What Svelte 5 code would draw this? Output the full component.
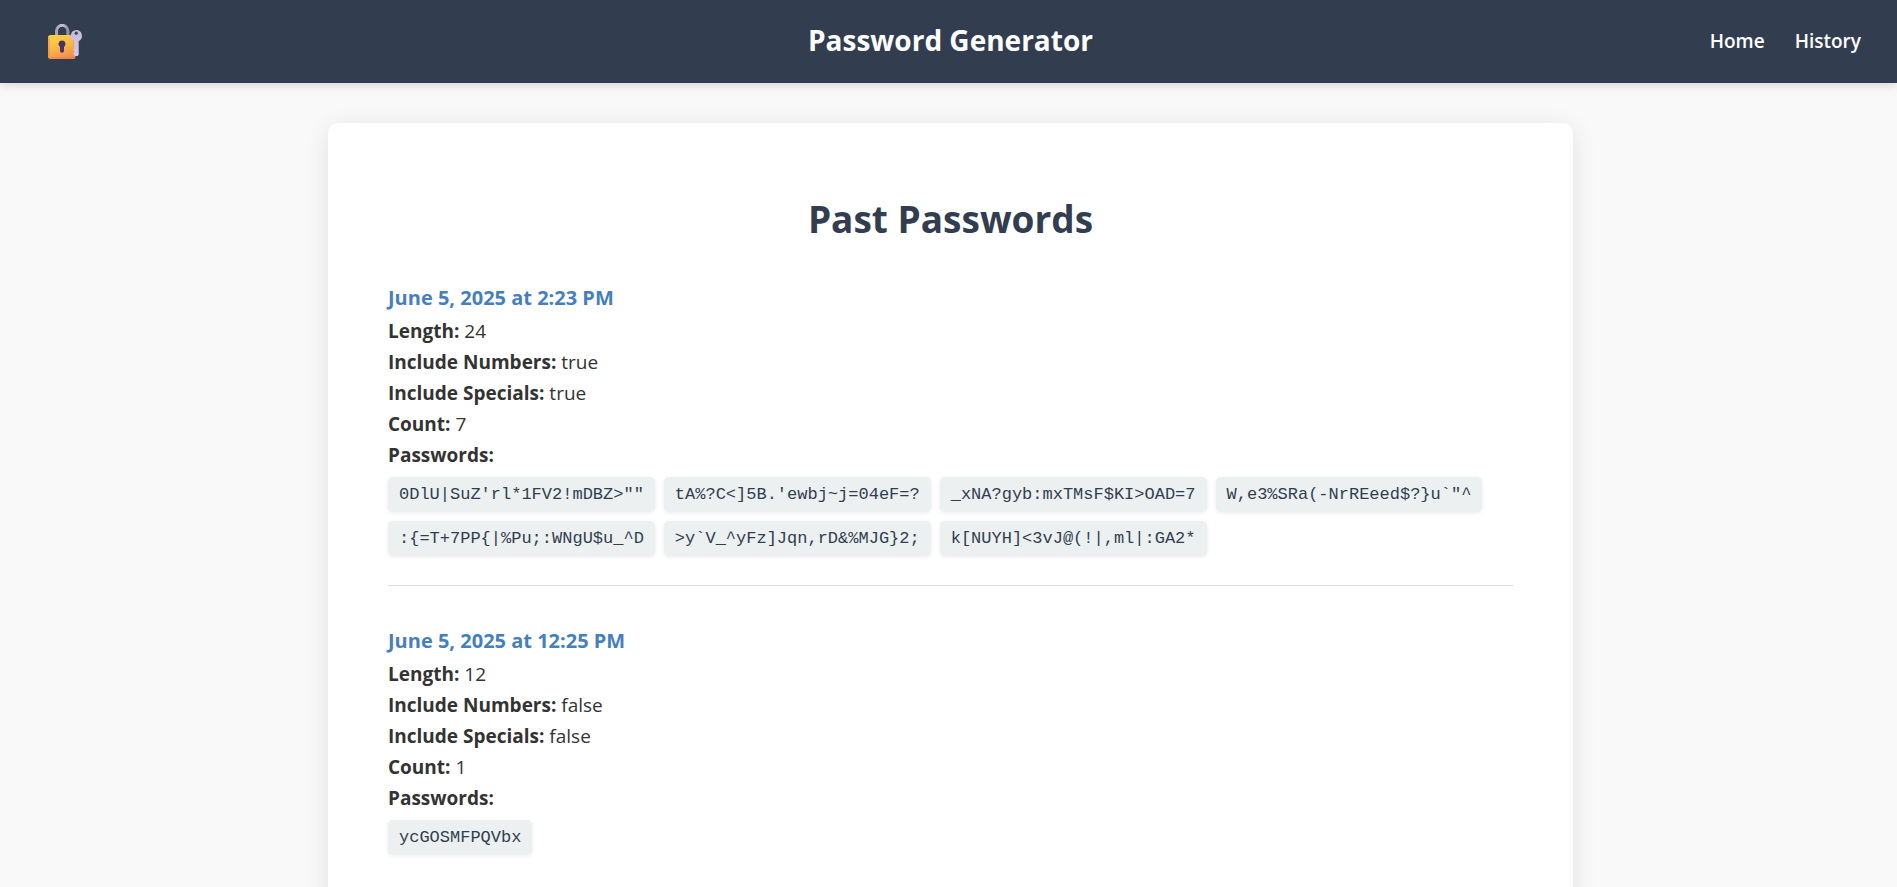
<script>
  const entries = [
    {
      date: 'June 5, 2025 at 2:23 PM',
      length: 24,
      numbers: true,
      specials: true,
      passwords: [
        `0DlU|SuZ'rl*1FV2!mDBZ>""`,
        `tA%?C<]5B.'ewbj~j=04eF=?`,
        `_xNA?gyb:mxTMsF$KI>OAD=7`,
        'W,e3%SRa(-NrREeed$?}u`"^',
        ':{=T+7PP{|%Pu;:WNgU$u_^D',
        '>y`V_^yFz]Jqn,rD&%MJG}2;',
        'k[NUYH]<3vJ@(!|,ml|:GA2*'
      ]
    },
    {
      date: 'June 5, 2025 at 12:25 PM',
      length: 12,
      numbers: false,
      specials: false,
      passwords: ['ycGOSMFPQVbx']
    }
  ];
</script>

<header>
  <a class="logo" href="#home" aria-label="Password Generator home">
    <svg viewBox="0 0 34 35" width="34" height="35" aria-hidden="true">
      <defs>
        <linearGradient id="body" x1="0.3" y1="0" x2="0.7" y2="1">
          <stop offset="0" stop-color="#ffd044" />
          <stop offset="0.5" stop-color="#fbb548" />
          <stop offset="1" stop-color="#f28a50" />
        </linearGradient>
        <linearGradient id="shackle" x1="0" y1="0" x2="1" y2="0">
          <stop offset="0" stop-color="#a9a3b4" />
          <stop offset="0.5" stop-color="#c9c4d2" />
          <stop offset="1" stop-color="#948d9e" />
        </linearGradient>
        <linearGradient id="key" x1="0" y1="0" x2="0" y2="1">
          <stop offset="0" stop-color="#c6bbdb" />
          <stop offset="1" stop-color="#d5cbe6" />
        </linearGradient>
      </defs>
      <path d="M8.500 13V7a5.700 5.700 0 0 1 11.400 0v6" fill="none" stroke="url(#shackle)" stroke-width="3" />
      <rect x="0" y="11" width="27.500" height="24" rx="2.500" fill="url(#body)" />
      <path d="M1 13.500v19" stroke="#e9783c" stroke-width="1.200" opacity="0.6" />
      <path d="M1.500 34h24" stroke="#e9703f" stroke-width="1.200" opacity="0.5" />
      <path d="M22.500 11a6.500 6.500 0 0 0 3.300 6.300v13l1.700 1.500V11z" fill="#d9853f" opacity="0.5" />
      <path d="M14 16.600a3.500 3.500 0 0 1 2 6.400v3.800a2 2 0 0 1-4 0V23a3.500 3.500 0 0 1 2-6.400z" fill="#4a3264" />
      <path d="M28.200 6a5.800 5.800 0 0 1 2.500 11v13.700l-1 1.300h-2.600l-1.500-1.300v-1.900l1-1-1-1.100v-1.900l1-1-.6-.9V17A5.800 5.800 0 0 1 28.200 6z" fill="url(#key)" />
      <circle cx="28.200" cy="9.200" r="1.600" fill="#3e3f5b" />
    </svg>
  </a>
  <span class="brand">Password Generator</span>
  <nav>
    <a href="#home">Home</a>
    <a href="#history">History</a>
  </nav>
</header>

<div class="page">
  <main>
    <h1>Past Passwords</h1>
    {#each entries as entry}
      <section>
        <h2>{entry.date}</h2>
        <p><strong>Length:</strong> {entry.length}</p>
        <p><strong>Include Numbers:</strong> {entry.numbers}</p>
        <p><strong>Include Specials:</strong> {entry.specials}</p>
        <p><strong>Count:</strong> {entry.passwords.length}</p>
        <p><strong>Passwords:</strong></p>
        <ul>
          {#each entry.passwords as password}
            <li>{password}</li>
          {/each}
        </ul>
      </section>
    {/each}
  </main>
</div>

<style>
  :global(body) {
    background: #f9f9f9;
    color: #333;
    font-family: 'Open Sans', 'Noto Sans', sans-serif;
    font-size: 19px;
    line-height: 31px;
  }

  header {
    display: grid;
    grid-template-columns: 1fr auto 1fr;
    align-items: center;
    box-sizing: border-box;
    min-height: 83px;
    padding: 0 36px 0 40px;
    background: #323e4f;
    color: #fff;
    box-shadow: 0 2px 10px rgba(0, 0, 0, 0.15);
  }

  .logo {
    display: flex;
    justify-self: start;
    margin-left: 8px;
  }

  .brand {
    padding-bottom: 4px;
    font-size: 28px;
    font-weight: 700;
    line-height: 40px;
  }

  nav {
    display: flex;
    justify-content: flex-end;
    gap: 30px;
  }

  nav a {
    color: #fff;
    font-weight: 600;
    text-decoration: none;
  }

  .page {
    padding: 40px 36px 40px 40px;
  }

  main {
    box-sizing: border-box;
    max-width: 1245px;
    margin: 0 auto;
    padding: 60px;
    background: #fff;
    border-radius: 10px;
    box-shadow: 0 5px 24px rgba(0, 0, 0, 0.1);
  }

  h1 {
    margin: 0 0 27px;
    color: #323e4f;
    font-size: 37px;
    line-height: 72px;
    text-align: center;
  }

  section + section {
    margin-top: 39px;
  }

  section:not(:last-child) {
    padding-bottom: 29px;
    border-bottom: 1px solid #dcdddf;
  }

  h2 {
    margin: 0 0 3px;
    color: #467fbd;
    font-size: 20px;
    font-weight: 700;
    line-height: 31px;
  }

  p {
    margin: 0;
  }

  ul {
    display: flex;
    flex-wrap: wrap;
    gap: 9px;
    margin: 6px 0 0;
    padding: 0;
    list-style: none;
  }

  li {
    padding: 6px 11px;
    background: #ecf0f1;
    border-radius: 5px;
    box-shadow: 0 1px 4px rgba(0, 0, 0, 0.08);
    color: #323e4f;
    font-family: 'Liberation Mono', monospace;
    font-size: 17px;
    line-height: 23px;
  }
</style>
